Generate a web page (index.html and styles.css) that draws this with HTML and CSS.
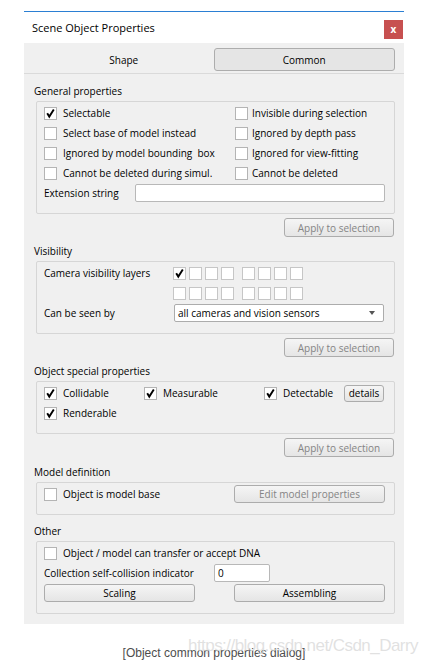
FILE: index.html
```html
<!DOCTYPE html>
<html>
<head>
<meta charset="utf-8">
<link rel="stylesheet" href="styles.css">
</head>
<body>
<div class="window">
  <div class="titlebar">
    <span class="title">Scene Object Properties</span>
    <span class="close">x</span>
  </div>
  <div class="content">
    <div class="tabs">
      <div class="tab">Shape</div>
      <div class="tab active">Common</div>
    </div>
    <div class="body">
      <div class="section-label first">General properties</div>
      <div class="group">
        <div class="grid-general">
          <label class="check"><span class="box"><svg class="tick" viewBox="0 0 11 11" width="11" height="11"><path d="M2.2 5.2 L4.3 8.6 L8.8 1.6" /></svg></span>Selectable</label>
          <label class="check"><span class="box"></span>Invisible during selection</label>
          <label class="check"><span class="box"></span>Select base of model instead</label>
          <label class="check"><span class="box"></span>Ignored by depth pass</label>
          <label class="check"><span class="box"></span>Ignored by model bounding&nbsp; box</label>
          <label class="check"><span class="box"></span>Ignored for view-fitting</label>
          <label class="check"><span class="box"></span>Cannot be deleted during simul.</label>
          <label class="check"><span class="box"></span>Cannot be deleted</label>
        </div>
        <div class="row ext-row">
          <span class="ext-label">Extension string</span>
          <span class="field ext-field"></span>
        </div>
      </div>
      <div class="apply-row"><span class="btn disabled apply">Apply to selection</span></div>

      <div class="section-label">Visibility</div>
      <div class="group">
        <div class="grid-vis">
          <span class="vis-label">Camera visibility layers</span>
          <div class="layers">
            <div class="layer-group">
              <span class="lbox"><svg class="tick" viewBox="0 0 11 11" width="11" height="11"><path d="M2.2 5.2 L4.3 8.6 L8.8 1.6" /></svg></span><span class="lbox"></span><span class="lbox"></span><span class="lbox"></span>
            </div>
            <div class="layer-group">
              <span class="lbox"></span><span class="lbox"></span><span class="lbox"></span><span class="lbox"></span>
            </div>
          </div>
          <span></span>
          <div class="layers">
            <div class="layer-group">
              <span class="lbox"></span><span class="lbox"></span><span class="lbox"></span><span class="lbox"></span>
            </div>
            <div class="layer-group">
              <span class="lbox"></span><span class="lbox"></span><span class="lbox"></span><span class="lbox"></span>
            </div>
          </div>
          <span class="vis-label">Can be seen by</span>
          <div class="combo"><span>all cameras and vision sensors</span><span class="arrow"></span></div>
        </div>
      </div>
      <div class="apply-row"><span class="btn disabled apply">Apply to selection</span></div>

      <div class="section-label">Object special properties</div>
      <div class="group">
        <div class="grid-special">
          <label class="check"><span class="box"><svg class="tick" viewBox="0 0 11 11" width="11" height="11"><path d="M2.2 5.2 L4.3 8.6 L8.8 1.6" /></svg></span>Collidable</label>
          <label class="check"><span class="box"><svg class="tick" viewBox="0 0 11 11" width="11" height="11"><path d="M2.2 5.2 L4.3 8.6 L8.8 1.6" /></svg></span>Measurable</label>
          <label class="check"><span class="box"><svg class="tick" viewBox="0 0 11 11" width="11" height="11"><path d="M2.2 5.2 L4.3 8.6 L8.8 1.6" /></svg></span>Detectable</label>
          <span class="btn details">details</span>
          <label class="check"><span class="box"><svg class="tick" viewBox="0 0 11 11" width="11" height="11"><path d="M2.2 5.2 L4.3 8.6 L8.8 1.6" /></svg></span>Renderable</label>
        </div>
      </div>
      <div class="apply-row"><span class="btn disabled apply">Apply to selection</span></div>

      <div class="section-label model-label">Model definition</div>
      <div class="group">
        <div class="grid-model">
          <label class="check"><span class="box"></span>Object is model base</label>
          <span class="btn disabled wide">Edit model properties</span>
        </div>
      </div>

      <div class="section-label after-group">Other</div>
      <div class="group">
        <div class="row">
          <label class="check"><span class="box"></span>Object / model can transfer or accept DNA</label>
        </div>
        <div class="row">
          <span class="coll-label">Collection self-collision indicator</span>
          <span class="field small-field">0</span>
        </div>
        <div class="grid-buttons">
          <span class="btn wide">Scaling</span>
          <span class="btn wide">Assembling</span>
        </div>
      </div>
    </div>
  </div>
</div>
<div class="footer">
  <div class="caption">[Object common properties dialog]</div>
  <div class="watermark">https://blog.csdn.net/Csdn_Darry</div>
</div>
</body>
</html>
```
FILE: styles.css
```css
* { box-sizing: border-box; }

body {
  margin: 0;
  background: #ffffff;
  font-family: "Open Sans", "Noto Sans", sans-serif;
  font-size: 10px;
  color: #000000;
}

.window {
  width: 380px;
  margin: 11px 0 0 24px;
  border-top: 1px solid #2b7fd3;
}

.titlebar {
  height: 31px;
  display: flex;
  justify-content: space-between;
  align-items: flex-start;
  padding: 0 1px 0 8px;
  background: #ffffff;
}

.title {
  font-size: 11px;
  line-height: 31px;
}

.close {
  margin-top: 8px;
  width: 19px;
  height: 19px;
  background: #c75050;
  color: #ffffff;
  font-weight: bold;
  font-size: 10px;
  line-height: 1;
  display: flex;
  align-items: center;
  justify-content: center;
  padding-bottom: 1px;
}

.content {
  background: #f0f0f0;
  padding-bottom: 10px;
}

.tabs {
  display: flex;
  padding: 5px 9px 2px 10px;
  border-bottom: 1px solid #dadada;
}

.tab {
  flex: 1;
  height: 23px;
  display: flex;
  align-items: center;
  justify-content: center;
}

.tab.active {
  background: #e5e5e5;
  border: 1px solid #adadad;
  border-radius: 3px;
}

.body {
  padding: 0 9px 0 10px;
}

.section-label {
  line-height: 20px;
  margin-top: 4px;
}

.section-label.first { margin-top: 7px; }
.section-label.model-label { margin-top: 5px; }
.section-label.after-group { margin-top: 6px; }

.group {
  margin-left: 2px;
  border: 1px solid #d6d6d6;
  border-radius: 2px;
  padding: 1px 9px 10px 7px;
}

.row {
  height: 20px;
  display: flex;
  align-items: center;
}

.check {
  display: flex;
  align-items: center;
  gap: 6px;
  white-space: nowrap;
  height: 20px;
}

.box, .lbox {
  width: 13px;
  height: 13px;
  background: #ffffff;
  border: 1px solid #b4b4b4;
  flex: none;
  display: flex;
  align-items: center;
  justify-content: center;
}

.lbox { border-color: #c6c6c6; }

.tick path {
  fill: none;
  stroke: #000000;
  stroke-width: 1.9;
}

.grid-general {
  display: grid;
  grid-template-columns: 191px 1fr;
  grid-auto-rows: 20px;
}

.grid-general .check:nth-child(even) { gap: 4px; }

.ext-label { width: 91px; flex: none; }

.field {
  height: 18px;
  background: #ffffff;
  border: 1px solid #b8b8b8;
  border-radius: 2px;
  padding-left: 3px;
  display: flex;
  align-items: center;
}

.ext-field { flex: 1; }

.apply-row {
  display: flex;
  justify-content: flex-end;
  margin-top: 4px;
  padding-right: 1px;
}

.btn {
  height: 18px;
  border: 1px solid #acacac;
  border-radius: 3px;
  background: linear-gradient(#f5f5f5, #e5e5e5);
  display: flex;
  align-items: center;
  justify-content: center;
  white-space: nowrap;
}

.btn.disabled { color: #848484; }

.apply { width: 110px; height: 19px; }

.grid-vis {
  display: grid;
  grid-template-columns: 129px 1fr;
  grid-auto-rows: 20px;
  align-items: center;
}

.layers {
  display: flex;
  gap: 8px;
}

.layer-group {
  display: flex;
  gap: 3px;
}

.combo {
  width: 210px;
  height: 18px;
  margin-left: 1px;
  background: #ffffff;
  border: 1px solid #acacac;
  border-radius: 2px;
  padding: 0 8px 0 3px;
  display: flex;
  align-items: center;
  justify-content: space-between;
}

.arrow {
  width: 0;
  height: 0;
  border-left: 3.5px solid transparent;
  border-right: 3.5px solid transparent;
  border-top: 4px solid #555555;
}

.grid-special {
  display: grid;
  grid-template-columns: 100px 120px 80px 40px;
  grid-auto-rows: 20px;
  align-items: center;
}

.details { height: 17px; }

.grid-model {
  display: grid;
  grid-template-columns: 190px 151px;
  grid-auto-rows: 20px;
  align-items: center;
}

.coll-label { width: 170px; flex: none; }

.small-field { width: 56px; }

.grid-buttons {
  display: grid;
  grid-template-columns: 151px 151px;
  column-gap: 39px;
  height: 20px;
  align-items: center;
}

.wide { height: 18px; }

.footer {
  position: relative;
  height: 40px;
}

.caption {
  padding-top: 21px;
  text-align: center;
  font-family: "Liberation Sans", Arial, sans-serif;
  font-size: 12px;
  line-height: 16px;
  color: #4d4d4d;
}

.watermark {
  position: absolute;
  left: 188px;
  top: 12px;
  font-family: "Liberation Sans", Arial, sans-serif;
  font-size: 17px;
  line-height: 20px;
  letter-spacing: -0.55px;
  color: rgba(215, 215, 215, 0.75);
  white-space: nowrap;
}
```
